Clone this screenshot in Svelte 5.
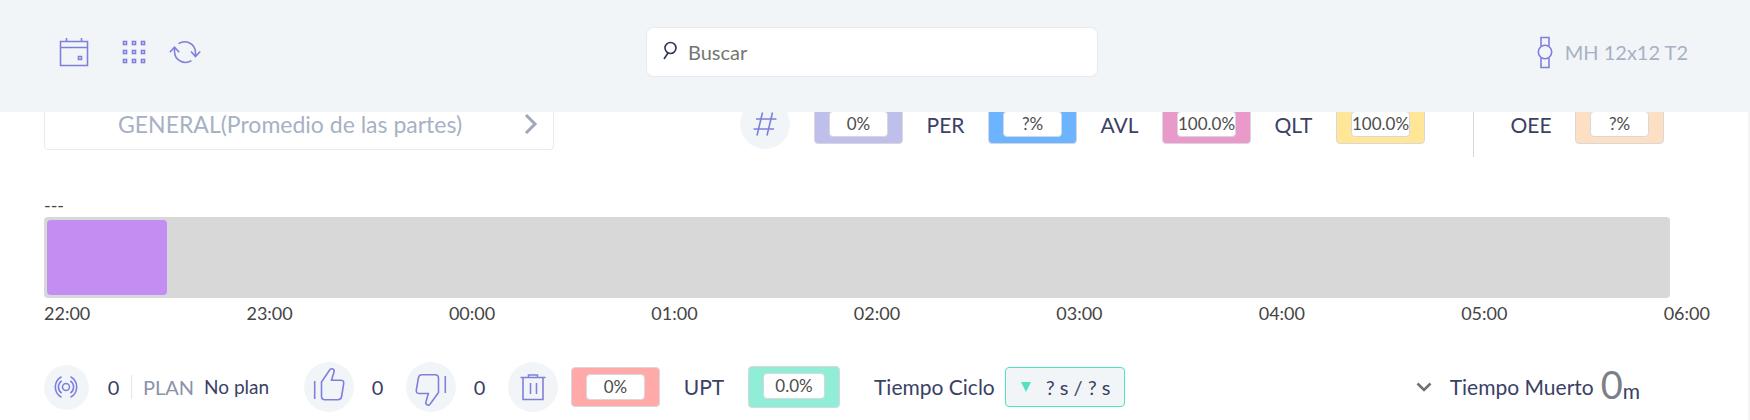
<script>
  const metrics = [
    { label: '', value: '0%', color: '#bfbfec' },
    { label: 'PER', value: '?%', color: '#6cb4ff' },
    { label: 'AVL', value: '100.0%', color: '#e99acb' },
    { label: 'QLT', value: '100.0%', color: '#ffe797' }
  ];
  const hours = ['22:00', '23:00', '00:00', '01:00', '02:00', '03:00', '04:00', '05:00', '06:00'];
  const segments = [{ width: 7.4, color: '#c38df2' }];
  const dots = [1, 10, 19];
</script>

{#snippet gauge(value, color)}
  <div class="gauge" style="background-color: {color}"><span>{value}</span></div>
{/snippet}

<div class="page">
  <header>
    <nav>
      <button aria-label="Calendario">
        <svg width="30" height="30" viewBox="0 0 30 30">
          <path d="M1.5 4.5h27v24h-27zM1.5 10.500h27M7.500 1v3M22.500 1v3M19.500 19.500h3v3h-3z" />
        </svg>
      </button>
      <button aria-label="Aplicaciones" class="apps">
        <svg width="24" height="24" viewBox="0 0 24 24">
          {#each dots as y}{#each dots as x}<rect x={x + 0.5} y={y + 0.5} width="3" height="3" />{/each}{/each}
        </svg>
      </button>
      <button aria-label="Actualizar">
        <svg width="32" height="24" viewBox="0 0 32 24">
          <path d="M9.500 3.600A11 11 0 0 1 26.500 12.500v4M22 11.500l4.500 5 4.700-5M22.500 20.600A11 11 0 0 1 5.500 11.500v-4M.8 12.200l4.700-5 4.700 5" />
        </svg>
      </button>
    </nav>
    <label class="search">
      <svg width="14" height="20" viewBox="0 0 14 20">
        <circle cx="7.500" cy="7" r="5.500" /><path d="M5 12l-4 6" />
      </svg>
      <input type="text" placeholder="Buscar" aria-label="Buscar" />
    </label>
    <div class="machine">
      <svg width="16" height="34" viewBox="0 0 16 34">
        <circle cx="8" cy="17" r="6.700" />
        <path d="M4 11.500V2.500h8v9M4 22.500v10h8v-10" />
      </svg>
      <span>MH 12x12 T2</span>
    </div>
  </header>

  <main>
    <section class="summary">
      <button class="part">
        <span>GENERAL(Promedio de las partes)</span>
        <svg width="14" height="22" viewBox="0 0 14 22"><path d="M2 2l9 9-9 9" /></svg>
      </button>
      <div class="metrics">
        <div class="circle hash">
          <svg width="24" height="26" viewBox="0 0 24 26">
            <path d="M9.500 1.500L4 24.500M19.500 1.500L14 24.500M3 8h20.500M.5 18H21" />
          </svg>
        </div>
        {#each metrics as m}
          {#if m.label}<span class="label">{m.label}</span>{/if}
          {@render gauge(m.value, m.color)}
        {/each}
        <div class="rule"></div>
        <span class="label oee">OEE</span>
        {@render gauge('?%', '#fddfc3')}
      </div>
    </section>

    <section class="timeline">
      <div class="name">---</div>
      <div class="track">
        {#each segments as s}<div class="segment" style="width: {s.width}%; background-color: {s.color}"></div>{/each}
      </div>
      <div class="hours">{#each hours as h}<span>{h}</span>{/each}</div>
    </section>

    <section class="status">
      <div class="circle small">
        <svg width="26" height="24" viewBox="0 0 26 24">
          <circle cx="12" cy="12" r="3.500" />
          <path d="M7.700 5.800a7.500 7.500 0 0 0 0 12.400M16.300 5.800a7.500 7.500 0 0 1 0 12.400M7.500 1.800a11.500 11.500 0 0 0 0 20.400M16.500 1.800a11.500 11.500 0 0 1 0 20.400" />
        </svg>
      </div>
      <span class="count signal">0</span>
      <div class="plan"><span class="key">PLAN</span><span>No plan</span></div>
      <div class="circle">
        <svg width="32" height="40" viewBox="0 0 32 40">
          <path d="M1.700 14v18M8.500 15L16.800 2.800c1.500-2 5.200-.8 4.200 2.200L18.500 13.200h9c2.300 0 3.500 1 3.200 3.300l-2 12.500c-.4 2.700-1.400 3.700-3.700 3.700H12c-2.500 0-3.500-1-3.500-3.500z" />
        </svg>
      </div>
      <span class="count">0</span>
      <div class="circle">
        <svg width="32" height="40" viewBox="0 -6 32 40">
          <path d="M30.300 3v17M23.500 19.500L15 31.200c-1.500 1.800-5 .7-4-2.400l2.300-8.300H4.500c-2.300 0-3.500-1-3.200-3.300L3.300 5.500C3.700 2.800 4.700 1.800 7 1.800h13c2.500 0 3.500 1 3.500 3.500z" />
        </svg>
      </div>
      <span class="count">0</span>
      <div class="circle">
        <svg width="26" height="28" viewBox="0 0 26 28">
          <path d="M.5 4.500h25M8.500 4V2h9v2M3 4.500v22h20v-22M10.500 10v11M16.500 10v11" />
        </svg>
      </div>
      <div class="scrap">{@render gauge('0%', '#ffa9a9')}</div>
      <span class="label">UPT</span>
      <div class="upt">{@render gauge('0.0%', '#90eed7')}</div>
      <span class="cycle">Tiempo Ciclo</span>
      <div class="cycle-time">
        <svg width="10" height="10" viewBox="0 0 10 10"><path d="M0 0h10L5 10z" /></svg>
        <span>? s / ? s</span>
      </div>
      <div class="downtime">
        <button aria-label="Desplegar">
          <svg width="16" height="10" viewBox="0 0 16 10"><path d="M1.500 1.500L8 8l6.500-6.500" /></svg>
        </button>
        <span>Tiempo Muerto</span>
        <span class="time"><b>0</b>m</span>
      </div>
    </section>
  </main>
</div>

<style>
  :global(body) {
    margin: 0;
    background: #f2f5f8;
  }
  .page {
    font-family: Lato, sans-serif;
    font-size: 20px;
    line-height: 24px;
    color: #3a4164;
    overflow: hidden;
    white-space: nowrap;
  }
  svg {
    display: block;
    flex: none;
    fill: none;
    stroke: #7f80dc;
    stroke-width: 1.6;
  }
  button {
    border: 0;
    padding: 0;
    background: none;
    font: inherit;
    color: inherit;
    cursor: pointer;
  }
  header {
    position: relative;
    z-index: 1;
    display: grid;
    grid-template-columns: 1fr 452px 1fr;
    align-items: center;
    box-sizing: border-box;
    height: 112px;
    padding: 0 62px 8px 56px;
    background: #f2f5f8;
  }
  nav {
    display: flex;
    align-items: center;
    padding-left: 3px;
  }
  .apps {
    margin: 0 23px 0 33px;
  }
  .search {
    display: flex;
    align-items: center;
    gap: 11px;
    box-sizing: border-box;
    height: 50px;
    padding: 0 16px;
    background: #fff;
    border: 1px solid #e8ebf0;
    border-radius: 8px;
  }
  .search svg {
    stroke: #303655;
    margin-bottom: 2px;
  }
  .search input {
    flex: 1;
    min-width: 0;
    border: 0;
    padding: 0;
    outline: 0;
    background: none;
    font: inherit;
    color: inherit;
  }
  .search input::placeholder {
    color: #757575;
  }
  .machine {
    display: flex;
    align-items: center;
    justify-content: flex-end;
    gap: 12px;
    color: #a7b1c5;
  }
  main {
    margin-right: 2px;
    padding: 0 38px 8px 44px;
    background: #fff;
  }
  .summary {
    display: flex;
    align-items: flex-start;
    justify-content: space-between;
    margin-top: -21px;
    padding-right: 46px;
  }
  .part {
    display: flex;
    align-items: center;
    justify-content: space-between;
    box-sizing: border-box;
    width: 510px;
    height: 59px;
    padding: 7px 15px 0 73px;
    border: 1px solid #e9e9f2;
    border-radius: 4px;
    font-size: 23px;
    color: #a7b1c5;
  }
  .part svg {
    stroke: #a0a7bb;
    stroke-width: 3;
  }
  .metrics {
    display: flex;
    align-items: center;
    height: 66px;
  }
  .hash {
    margin-right: 24px;
  }
  .circle {
    display: flex;
    align-items: center;
    justify-content: center;
    flex: none;
    width: 50px;
    height: 50px;
    border-radius: 50%;
    background: #f2f5f8;
  }
  .small {
    width: 45px;
    height: 45px;
  }
  .label {
    width: 86px;
    text-align: center;
    font-size: 21px;
  }
  .metrics .label {
    width: 85px;
    padding-top: 2px;
  }
  .gauge {
    box-sizing: border-box;
    width: 89px;
    height: 40px;
    padding: 6px 14px;
    border: 1px solid #d8d8dc;
    border-radius: 4px;
  }
  .gauge span {
    display: flex;
    justify-content: center;
    box-sizing: border-box;
    height: 26px;
    border: 1px solid #d8d8dc;
    border-radius: 4px;
    background: #fff;
    font-size: 17px;
    color: #4c4c4c;
  }
  .rule {
    align-self: stretch;
    width: 1px;
    margin-left: 48px;
    background: #d8d8d8;
  }
  .metrics .oee {
    width: 101px;
    padding-left: 13px;
    box-sizing: border-box;
  }
  .timeline {
    margin-top: 36px;
    font-size: 18px;
    color: #444;
  }
  .name {
    height: 24px;
  }
  .track {
    height: 75px;
    margin-right: 40px;
    padding: 3px;
    border-radius: 4px;
    background: #d8d8d8;
  }
  .segment {
    height: 100%;
    border-radius: 4px;
  }
  .hours {
    display: flex;
    justify-content: space-between;
    margin-top: 3px;
  }
  .status {
    display: flex;
    align-items: center;
    height: 50px;
    margin-top: 37px;
  }
  .count {
    box-sizing: border-box;
    width: 52px;
    padding-right: 5px;
    text-align: center;
  }
  .count.signal {
    width: 42px;
    padding: 0 0 0 7px;
  }
  .plan {
    display: flex;
    gap: 10px;
    box-sizing: border-box;
    width: 173px;
    padding-left: 11px;
    border-left: 1px solid #e4e6ec;
  }
  .plan span {
    font-size: 19px;
  }
  .plan .key {
    font-size: 20px;
    color: #8b92ab;
  }
  .scrap {
    margin-left: 13px;
  }
  .status .label {
    width: 88px;
  }
  .upt .gauge {
    width: 92px;
    height: 42px;
  }
  .cycle {
    margin: 0 10px 0 34px;
    font-size: 21px;
  }
  .cycle-time {
    display: flex;
    align-items: center;
    gap: 15px;
    box-sizing: border-box;
    height: 40px;
    padding: 0 13px 0 15px;
    border: 1px solid #50e3c2;
    border-radius: 4px;
    background: #f2f5f8;
  }
  .cycle-time svg {
    fill: #50e3c2;
    stroke: none;
  }
  .downtime {
    display: flex;
    align-items: center;
    margin-left: auto;
    padding-right: 70px;
    font-size: 21px;
  }
  .downtime svg {
    margin-right: 18px;
    stroke: #6d7078;
    stroke-width: 2.5;
  }
  .time {
    margin-left: 7px;
  }
  .time b {
    font-size: 38px;
    font-weight: 400;
    color: #7b7f87;
  }
</style>
